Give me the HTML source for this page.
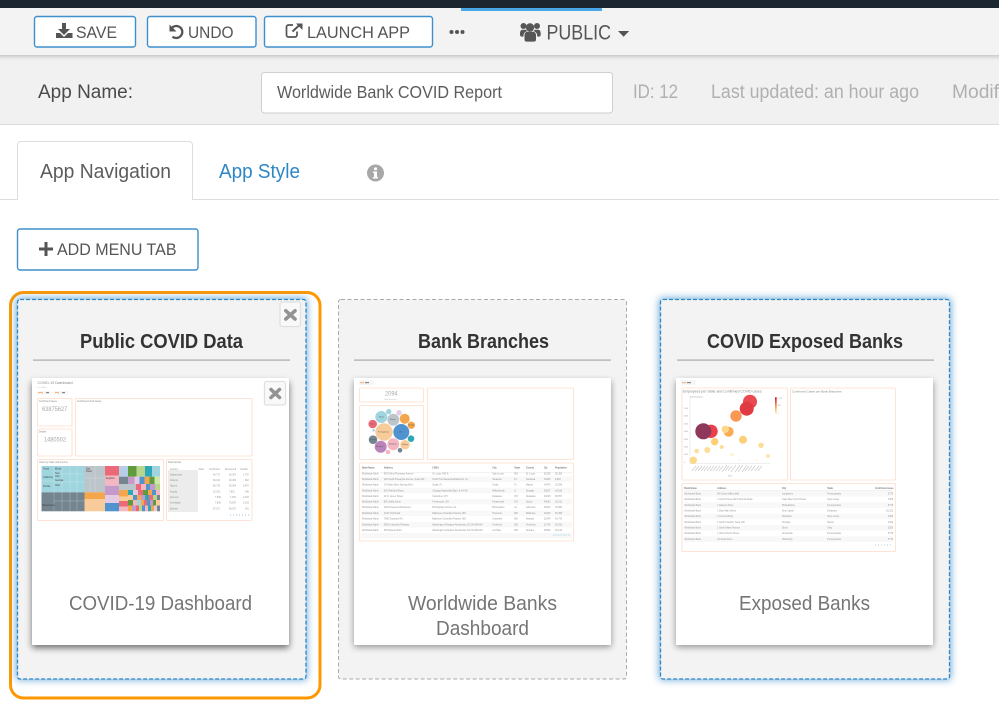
<!DOCTYPE html>
<html lang="en">
<head>
<meta charset="utf-8">
<title>Worldwide Bank COVID Report</title>
<style>
html,body{margin:0;padding:0;background:#fff;width:999px;height:727px;overflow:hidden}
svg{display:block;font-family:"Liberation Sans",sans-serif}
.b{fill:#fff;stroke:#3f8fcb;stroke-width:1.4}
.t{font-size:17px;fill:#555}
.g{font-size:19px;fill:#b0b0b0}
.h{font-size:20px;font-weight:bold;fill:#333}
.l{font-size:20px;fill:#757575}
.p{fill:#fff;stroke:#fde4d6;stroke-width:1.1}
.s text{font-size:2.3px;fill:#959595}
.hd text{font-weight:bold;fill:#777}
.x{fill:none;stroke:#939393;stroke-width:3.600;stroke-linecap:round}
</style>
</head>
<body>
<svg width="999" height="727" viewBox="0 0 999 727" xmlns="http://www.w3.org/2000/svg">
<defs>
<filter id="sh" x="-20%" y="-20%" width="140%" height="140%"><feGaussianBlur stdDeviation="3.5"/></filter>
<filter id="tb" x="-5%" y="-200%" width="110%" height="500%"><feGaussianBlur stdDeviation="2.500"/></filter>
<filter id="gl" x="-10%" y="-10%" width="120%" height="120%"><feGaussianBlur stdDeviation="4"/></filter>
<filter id="bl" x="-5%" y="-5%" width="110%" height="110%"><feGaussianBlur stdDeviation=".35"/></filter>
<linearGradient id="lg" x1="0" y1="0" x2="0" y2="1"><stop offset="0" stop-color="#c8102e"/><stop offset=".5" stop-color="#f79450"/><stop offset="1" stop-color="#fff3c4"/></linearGradient>
</defs>

<!-- top bars -->
<rect x="0" y="55" width="999" height="70" fill="#f1f1f1"/>
<rect x="-10" y="51" width="1020" height="5" fill="#888" opacity=".6" filter="url(#tb)"/>
<rect x="0" y="8" width="999" height="47" fill="#f3f3f3"/>
<rect x="0" y="0" width="999" height="8" fill="#1c2630"/>
<rect x="461" y="8" width="141" height="3" fill="#4aa8e8"/>
<rect x="0" y="124" width="999" height="1" fill="#dcdcdc"/>

<!-- toolbar buttons -->
<rect class="b" x="34.500" y="16.500" width="101" height="30.500" rx="2.500"/>
<path d="M62 23h4v6h4l-6 6-6-6h4z" fill="#555"/>
<path d="M56 33h4l4 4 4-4h4.500v5H56z" fill="#555"/>
<text class="t" x="76" y="38" textLength="41" lengthAdjust="spacingAndGlyphs">SAVE</text>

<rect class="b" x="147.500" y="16.500" width="108.500" height="30.500" rx="2.500"/>
<path d="M172.300 27.500A6 6 0 1 1 172.500 36.600" fill="none" stroke="#555" stroke-width="2.300"/>
<path d="M169.500 24.500v7h7z" fill="#555"/>
<text class="t" x="188" y="38" textLength="45.500" lengthAdjust="spacingAndGlyphs">UNDO</text>

<rect class="b" x="264.500" y="16.500" width="168" height="30.500" rx="2.500"/>
<path d="M297 31.500v3.500a2 2 0 0 1-2 2h-6.500a2 2 0 0 1-2-2v-8a2 2 0 0 1 2-2h4.500" fill="none" stroke="#555" stroke-width="1.700"/>
<path d="M292.500 31.500L299 25.500" fill="none" stroke="#555" stroke-width="2"/>
<path d="M296 23.500h6.500v6.500z" fill="#555"/>
<text class="t" x="307" y="38" textLength="103" lengthAdjust="spacingAndGlyphs">LAUNCH APP</text>

<circle cx="451.500" cy="32" r="2" fill="#555"/><circle cx="457" cy="32" r="2" fill="#555"/><circle cx="462.500" cy="32" r="2" fill="#555"/>

<!-- users icon -->
<g fill="#555">
<circle cx="530" cy="27.500" r="4.200"/><circle cx="523.500" cy="26" r="3"/><circle cx="537" cy="26" r="3"/>
<path d="M524.500 35c0-2 1.500-3.300 3-3.300h5.500c1.500 0 3 1.300 3 3.300v4.700c0 1.200-1 1.900-2 1.900h-7.500c-1 0-2-.7-2-1.900z"/>
<path d="M520 34c0-2.500 .8-4.200 2.500-4.200h3.500c.3 .7 .8 1.200 1.300 1.500-2 .2-3.800 1.900-3.800 4.300v1h-1.500c-1.300 0-2-.8-2-2z"/>
<path d="M540.700 34c0-2.500-.8-4.200-2.500-4.200h-3.500c-.3 .7-.8 1.200-1.300 1.500 2 .2 3.800 1.900 3.800 4.300v1h1.500c1.300 0 2-.8 2-2z"/>
</g>
<text x="546.500" y="39.500" font-size="21" fill="#555" textLength="64.500" lengthAdjust="spacingAndGlyphs">PUBLIC</text>
<path d="M618 31h11.200l-5.600 5.700z" fill="#555"/>

<!-- app name row -->
<text x="38" y="98" font-size="19" fill="#4a4a4a" textLength="95" lengthAdjust="spacingAndGlyphs">App Name:</text>
<rect x="261.500" y="72.500" width="351" height="40.500" rx="3" fill="#fff" stroke="#cfcfcf"/>
<text x="277" y="98" font-size="17.500" fill="#5c5c5c" textLength="225" lengthAdjust="spacingAndGlyphs">Worldwide Bank COVID Report</text>
<text class="g" x="633" y="98" textLength="45" lengthAdjust="spacingAndGlyphs">ID: 12</text>
<text class="g" x="711" y="98" textLength="208" lengthAdjust="spacingAndGlyphs">Last updated: an hour ago</text>
<text class="g" x="952" y="98" textLength="47" lengthAdjust="spacingAndGlyphs">Modif</text>

<!-- tabs -->
<rect x="0" y="125" width="999" height="602" fill="#fff"/>
<rect x="0" y="199" width="999" height="1" fill="#ddd"/>
<path d="M17.500 200V145a3.500 3.500 0 0 1 3.500-3.500H189a3.500 3.500 0 0 1 3.500 3.500V200" fill="#fff" stroke="#ddd"/>
<text x="40" y="178" font-size="20" fill="#5c5c5c" textLength="131" lengthAdjust="spacingAndGlyphs">App Navigation</text>
<text x="219" y="178" font-size="20" fill="#2d86c5" textLength="81" lengthAdjust="spacingAndGlyphs">App Style</text>
<circle cx="375.500" cy="173" r="8.500" fill="#a8a8a8"/>
<rect x="374" y="167.500" width="3" height="2.600" rx=".5" fill="#fff"/>
<path d="M373 171.500h4v5.500h1v1.500h-5.200V177h1.200v-4H373z" fill="#fff"/>

<rect class="b" x="17.500" y="229" width="180.500" height="41" rx="2.500"/>
<path d="M44.500 242h3v5.500H53v3H47.500V256h-3v-5.500H39v-3H44.500z" fill="#555"/>
<text class="t" x="57" y="255" textLength="119.500" lengthAdjust="spacingAndGlyphs">ADD MENU TAB</text>

<!-- card 1 -->
<rect x="10.500" y="292.500" width="309.500" height="405.500" rx="13" fill="#fff" stroke="#ff9800" stroke-width="3"/>
<rect x="16" y="298" width="291" height="382" rx="3" fill="#3f8fcb" opacity=".75" filter="url(#gl)"/>
<rect x="17.500" y="299.500" width="288.500" height="379.500" rx="2.500" fill="#f3f3f3" stroke="#2d86c5" stroke-width="1.300" stroke-dasharray="4 2"/>
<rect x="280" y="302" width="20.500" height="24.500" rx="2" fill="#f9f9f9" stroke="#e0e0e0" stroke-width="1.300"/>
<path class="x" d="M285.800 310.800L295 319M295 310.800L285.800 319"/>
<text class="h" x="80" y="348" textLength="163" lengthAdjust="spacingAndGlyphs">Public COVID Data</text>
<rect x="33" y="359.500" width="257" height="1.200" fill="#aaa"/>
<rect x="32" y="382" width="257" height="266" fill="#000" opacity=".55" filter="url(#sh)"/>
<rect x="32" y="378" width="257" height="267" rx="1" fill="#fff"/>
<text class="l" x="69" y="610" textLength="183" lengthAdjust="spacingAndGlyphs">COVID-19 Dashboard</text>

<g filter="url(#bl)">
<text x="37.500" y="384" font-size="3.600" fill="#888">COVID-19 Dashboard</text>
<text x="37.500" y="388" font-size="2" fill="#bbb">Last Filter</text>
<rect x="37.500" y="391" width="14" height="3.500" fill="#f6f6f6"/><rect x="54" y="391" width="14" height="3.500" fill="#f6f6f6"/>
<rect x="38" y="392" width="5" height="1.200" fill="#f8b98a"/><rect x="46" y="392" width="3" height="1.200" fill="#888"/>
<rect x="55" y="392" width="4" height="1.200" fill="#f8b98a"/><rect x="62" y="392" width="3" height="1.200" fill="#888"/>
<rect class="p" x="37.500" y="398.500" width="34.500" height="27.500" rx="1"/>
<rect class="p" x="37.500" y="429" width="34.500" height="27" rx="1"/>
<rect class="p" x="75.500" y="398.500" width="176.500" height="57.500" rx="1"/>
<rect class="p" x="37.500" y="459.500" width="126" height="61" rx="1"/>
<rect class="p" x="166.500" y="459.500" width="85.500" height="61" rx="1"/>
<text x="39" y="402" font-size="2.300" fill="#888">Confirmed Cases</text>
<text x="42" y="411" font-size="6" fill="#a8a8a8" textLength="25.300" lengthAdjust="spacingAndGlyphs">63875627</text>
<text x="39" y="432.500" font-size="2.300" fill="#888">Deaths</text>
<text x="44" y="441.700" font-size="6" fill="#a8a8a8" textLength="22" lengthAdjust="spacingAndGlyphs">1480502</text>
<text x="77" y="402" font-size="2.300" fill="#888">Confirmed Covid Cases</text>
<text x="39" y="463" font-size="2.300" fill="#888">Cases by State and Country</text>
<text x="168" y="463" font-size="2.300" fill="#888">Data Sample</text>
<!-- treemap -->
<rect x="41.500" y="466" width="43" height="26.300" fill="#9fd5de"/>
<rect x="41.500" y="492.300" width="43" height="19" fill="#74858f"/>
<rect x="84.500" y="466" width="20.500" height="26.300" fill="#bcc5ca"/>
<rect x="84.500" y="492.300" width="20.500" height="7" fill="#f3a64c"/>
<rect x="84.500" y="499.300" width="20.500" height="12" fill="#f8cb9a"/>
<rect x="105" y="466" width="14" height="9.700" fill="#ec6a78"/>
<rect x="105" y="475.700" width="14" height="10" fill="#f4b6c0"/>
<rect x="105" y="485.700" width="14" height="9.300" fill="#c39ac9"/>
<rect x="105" y="495" width="14" height="8" fill="#e3cbe6"/>
<rect x="105" y="503" width="14" height="8.300" fill="#4f93cf"/>
<rect x="119" y="466" width="9" height="10.700" fill="#b5cfe8"/>
<rect x="128" y="466" width="8.700" height="10.700" fill="#5f9b3e"/>
<rect x="136.700" y="466" width="8.300" height="10.700" fill="#b5d68c"/>
<rect x="145" y="466" width="7" height="10.700" fill="#2fa8b8"/>
<rect x="152" y="466" width="8" height="10.700" fill="#9fd5de"/>
<rect x="119" y="476.700" width="9" height="7.300" fill="#74858f"/>
<rect x="128" y="476.700" width="6.500" height="7.300" fill="#c39ac9"/>
<rect x="134.500" y="476.700" width="5" height="7.300" fill="#e3cbe6"/>
<rect x="139.500" y="476.700" width="5" height="7.300" fill="#4f93cf"/>
<rect x="144.500" y="476.700" width="5" height="7.300" fill="#f3a64c"/>
<rect x="149.500" y="476.700" width="5" height="7.300" fill="#5f9b3e"/>
<rect x="154.500" y="476.700" width="5.500" height="7.300" fill="#cfe6a8"/>
<rect x="119" y="484" width="9" height="6" fill="#bcc5ca"/>
<rect x="128" y="484" width="8" height="6" fill="#bcc5ca"/>
<rect x="136" y="484" width="5" height="6" fill="#ec6a78"/>
<rect x="141" y="484" width="5" height="6" fill="#f4b6c0"/>
<rect x="146" y="484" width="4" height="6" fill="#4f93cf"/>
<rect x="150" y="484" width="5" height="6" fill="#c39ac9"/>
<rect x="155" y="484" width="5" height="6" fill="#b5d68c"/>
<rect x="119" y="490" width="9" height="6.700" fill="#f3a64c"/>
<rect x="119" y="496.700" width="9" height="4.300" fill="#f8cb9a"/>
<rect x="119" y="501" width="9" height="5.700" fill="#ec6a78"/>
<rect x="119" y="506.700" width="9" height="4.600" fill="#f4b6c0"/>
<rect x="128" y="490" width="5" height="5" fill="#2fa8b8"/>
<rect x="133" y="490" width="5" height="5" fill="#e3cbe6"/>
<rect x="138" y="490" width="5" height="5" fill="#ec6a78"/>
<rect x="143" y="490" width="5" height="5" fill="#5f9b3e"/>
<rect x="148" y="490" width="4" height="5" fill="#f3a64c"/>
<rect x="152" y="490" width="4" height="5" fill="#4f93cf"/>
<rect x="156" y="490" width="4" height="5" fill="#f4b6c0"/>
<rect x="128" y="495" width="5" height="5" fill="#f8cb9a"/>
<rect x="133" y="495" width="4" height="5" fill="#4f93cf"/>
<rect x="137" y="495" width="4" height="5" fill="#f3a64c"/>
<rect x="141" y="495" width="4" height="5" fill="#c39ac9"/>
<rect x="145" y="495" width="4" height="5" fill="#2fa8b8"/>
<rect x="149" y="495" width="4" height="5" fill="#ec6a78"/>
<rect x="153" y="495" width="4" height="5" fill="#b5d68c"/>
<rect x="157" y="495" width="3" height="5" fill="#74858f"/>
<rect x="128" y="500" width="5" height="5.500" fill="#5f9b3e"/>
<rect x="133" y="500" width="4" height="5.500" fill="#f4b6c0"/>
<rect x="137" y="500" width="4" height="5.500" fill="#9fd5de"/>
<rect x="141" y="500" width="3" height="5.500" fill="#f3a64c"/>
<rect x="144" y="500" width="3" height="5.500" fill="#ec6a78"/>
<rect x="147" y="500" width="3" height="5.500" fill="#4f93cf"/>
<rect x="150" y="500" width="3" height="5.500" fill="#c39ac9"/>
<rect x="153" y="500" width="3" height="5.500" fill="#5f9b3e"/>
<rect x="156" y="500" width="4" height="5.500" fill="#f8cb9a"/>
<rect x="128" y="505.500" width="4" height="5.800" fill="#f3a64c"/>
<rect x="132" y="505.500" width="4" height="5.800" fill="#c39ac9"/>
<rect x="136" y="505.500" width="3" height="5.800" fill="#ec6a78"/>
<rect x="139" y="505.500" width="3" height="5.800" fill="#b5d68c"/>
<rect x="142" y="505.500" width="3" height="5.800" fill="#4f93cf"/>
<rect x="145" y="505.500" width="3" height="5.800" fill="#f4b6c0"/>
<rect x="148" y="505.500" width="3" height="5.800" fill="#2fa8b8"/>
<rect x="151" y="505.500" width="3" height="5.800" fill="#f3a64c"/>
<rect x="154" y="505.500" width="3" height="5.800" fill="#e3cbe6"/>
<rect x="157" y="505.500" width="3" height="5.800" fill="#74858f"/>
<path d="M54 466v26M70 466v26M54 474h30M54 482h30M62 466v26M77 466v26M41.500 481h12.500M54 492v19M70 492v19M62 492v19M77 492v19M54 501h30M84.500 478h20.500M95 466v26M90 478v14" stroke="#fff" stroke-width=".35" opacity=".55" fill="none"/>
<g font-size="2.300" fill="#444"><text x="43" y="469.500">Texas</text><text x="55" y="469.500">Illinois</text><text x="43" y="478">California</text><text x="55" y="474">New</text><text x="55" y="477">York</text><text x="43" y="487">Florida</text><text x="55" y="481">Georgia</text><text x="55" y="486">Ohio</text><text x="86" y="469.500">Sao</text><text x="86" y="472">Paulo</text><text x="106" y="479">England</text><text x="42" y="506">Maharashtra</text></g>
<!-- data sample -->
<rect x="168" y="470" width="30" height="42" fill="#ececec"/>
<g class="s">
<text x="170" y="470">Country</text><text x="198.500" y="470">State</text><text x="209" y="470">Confirmed</text><text x="225" y="470">Recovered</text><text x="240.500" y="470">Deaths</text>
<text x="170" y="475.500">Afghanistan</text><text x="213" y="475.500">46,717</text><text x="229" y="475.500">36,307</text><text x="243" y="475.500">1,797</text>
<text x="170" y="481">Albania</text><text x="213" y="481">39,014</text><text x="229" y="481">18,384</text><text x="245" y="481">822</text>
<text x="170" y="486.500">Algeria</text><text x="213" y="486.500">86,730</text><text x="229" y="486.500">55,924</text><text x="243" y="486.500">2,497</text>
<text x="170" y="492.500">Angola</text><text x="213" y="492.500">15,291</text><text x="229" y="492.500">7,851</text><text x="245" y="492.500">348</text>
<text x="170" y="498">Armenia</text><text x="215" y="498">7,836</text><text x="230" y="498">7,156</text><text x="243" y="498">2,183</text>
<text x="170" y="503.500">Azerbaijan</text><text x="215" y="503.500">7,836</text><text x="229" y="503.500">75,657</text><text x="243" y="503.500">1,533</text>
<text x="170" y="509.500">Bahrain</text><text x="213" y="509.500">87,107</text><text x="229" y="509.500">85,207</text><text x="245" y="509.500">341</text>
</g>
<path d="M230 515h20" stroke="#9fc4e0" stroke-width="1" stroke-dasharray="1 2"/>
</g>
<rect x="264.500" y="381.500" width="21" height="23.500" rx="2" fill="#f9f9f9" stroke="#e0e0e0" stroke-width="1.300"/>
<path class="x" d="M271 389.500L279.500 397.500M279.500 389.500L271 397.500"/>

<!-- card 2 -->
<rect x="338.500" y="299.500" width="288" height="379.500" rx="2.500" fill="#f3f3f3" stroke="#aaa" stroke-width="1" stroke-dasharray="4 2.500"/>
<text class="h" x="418" y="348" textLength="131" lengthAdjust="spacingAndGlyphs">Bank Branches</text>
<rect x="354" y="359.500" width="257" height="1.200" fill="#aaa"/>
<rect x="354" y="381" width="257" height="266" fill="#000" opacity=".4" filter="url(#sh)"/>
<rect x="354" y="378" width="257" height="267" rx="1" fill="#fff"/>
<text class="l" x="408" y="610" textLength="149" lengthAdjust="spacingAndGlyphs">Worldwide Banks</text>
<text class="l" x="436" y="635" textLength="93" lengthAdjust="spacingAndGlyphs">Dashboard</text>

<g filter="url(#bl)">
<rect x="359" y="380" width="15" height="5" fill="#f6f6f6"/>
<rect x="360" y="382" width="4" height="1.200" fill="#f8b98a"/><rect x="365" y="382" width="4" height="1.200" fill="#888"/>
<rect class="p" x="359.500" y="388" width="64" height="14" rx="1"/>
<rect class="p" x="359.500" y="405.500" width="64" height="54" rx="1"/>
<rect class="p" x="427.500" y="388" width="146" height="71.500" rx="1"/>
<rect class="p" x="359.500" y="463" width="214" height="78" rx="1"/>
<text x="385" y="395.700" font-size="6" fill="#a8a8a8" textLength="12.700" lengthAdjust="spacingAndGlyphs">2094</text>
<text x="384" y="400" font-size="1.900" fill="#bbb">Total Branches</text>
<g>
<circle cx="384" cy="432" r="8.700" fill="#f8cb9a"/><circle cx="401.300" cy="432" r="8" fill="#4f93cf"/>
<circle cx="381.300" cy="417" r="6" fill="#9fd5de"/><circle cx="393.300" cy="419.700" r="6" fill="#bcc5ca"/>
<circle cx="404.700" cy="418.700" r="5" fill="#f3a64c"/><circle cx="372.700" cy="424" r="4.300" fill="#ec6a78"/>
<circle cx="411.300" cy="425.300" r="3.700" fill="#f3a64c"/><circle cx="388.700" cy="411.700" r="2.700" fill="#9fd5de"/>
<circle cx="399" cy="412.700" r="2.700" fill="#e3cbe6"/><circle cx="373" cy="439.700" r="4.300" fill="#74858f"/>
<circle cx="380.700" cy="446.700" r="6" fill="#b983bc"/><circle cx="393.300" cy="444.300" r="6" fill="#f4b6c0"/>
<circle cx="405" cy="444.700" r="4.700" fill="#f8cb9a"/><circle cx="411" cy="438.700" r="3.300" fill="#2fa8b8"/>
<circle cx="388" cy="452" r="2.300" fill="#f4b6c0"/><circle cx="400" cy="450.300" r="2.300" fill="#74858f"/>
<circle cx="373.700" cy="430.300" r="1.300" fill="#b5cfe8"/>
</g>
<g font-size="1.800" fill="#555"><text x="378" y="432.500">Pennsylvania</text><text x="399" y="432.500">Ohio</text><text x="379" y="417.500">Illinois</text><text x="390" y="420">Florida</text><text x="408" y="425.500">Georgia</text><text x="370" y="424.500">Texas</text><text x="376" y="447">Michigan</text><text x="389" y="444.500">Maryland</text><text x="402" y="445">Indiana</text><text x="370" y="440">Virginia</text></g>
<rect x="361" y="472" width="211" height=".5" fill="#e4e4e4"/>
<rect x="361" y="476.500" width="211" height="5.500" fill="#f8f8f8"/><rect x="361" y="487.700" width="211" height="5.500" fill="#f8f8f8"/><rect x="361" y="499" width="211" height="5.500" fill="#f8f8f8"/><rect x="361" y="510.500" width="211" height="5.500" fill="#f8f8f8"/><rect x="361" y="522" width="211" height="5.500" fill="#f8f8f8"/><rect x="361" y="533" width="211" height="5.500" fill="#f8f8f8"/>
<g class="s">
<g class="hd"><text x="362" y="468.500">Bank Name</text><text x="383.700" y="468.500">Address</text><text x="432.300" y="468.500">CBSA</text><text x="492.300" y="468.500">City</text><text x="514.300" y="468.500">State</text><text x="526" y="468.500">County</text><text x="544" y="468.500">Zip</text><text x="555" y="468.500">Population</text></g>
<text x="362" y="474.500">Worldwide Bank</text><text x="383.700" y="474.500">8001 West Florissant Avenue</text><text x="432.300" y="474.500">St. Louis, MO-IL</text><text x="492.300" y="474.500">Saint Louis</text><text x="514.300" y="474.500">MO</text><text x="526" y="474.500">St. Louis</text><text x="544" y="474.500">63136</text><text x="555" y="474.500">36,386</text>
<text x="362" y="480">Worldwide Bank</text><text x="383.700" y="480">100 South Pineapple Avenue, Suite 200</text><text x="432.300" y="480">North Port-Sarasota-Bradenton, FL</text><text x="492.300" y="480">Sarasota</text><text x="514.300" y="480">FL</text><text x="526" y="480">Sarasota</text><text x="544" y="480">34236</text><text x="555" y="480">9,818</text>
<text x="362" y="485.700">Worldwide Bank</text><text x="383.700" y="485.700">714 East Silver Springs Blvd</text><text x="432.300" y="485.700">Ocala, FL</text><text x="492.300" y="485.700">Ocala</text><text x="514.300" y="485.700">FL</text><text x="526" y="485.700">Marion</text><text x="544" y="485.700">34470</text><text x="555" y="485.700">15,598</text>
<text x="362" y="491.300">Worldwide Bank</text><text x="383.700" y="491.300">625 Plainfield Road</text><text x="432.300" y="491.300">Chicago-Naperville-Elgin, IL-IN-WI</text><text x="492.300" y="491.300">Willowbrook</text><text x="514.300" y="491.300">IL</text><text x="526" y="491.300">Dupage</text><text x="544" y="491.300">60527</text><text x="555" y="491.300">24,618</text>
<text x="362" y="497">Worldwide Bank</text><text x="383.700" y="497">42 N. Green Street</text><text x="432.300" y="497">Columbus, OH</text><text x="492.300" y="497">Delaware</text><text x="514.300" y="497">OH</text><text x="526" y="497">Delaware</text><text x="544" y="497">43015</text><text x="555" y="497">36,557</text>
<text x="362" y="502.700">Worldwide Bank</text><text x="383.700" y="502.700">802 Gallia Street</text><text x="432.300" y="502.700">Portsmouth, OH</text><text x="492.300" y="502.700">Portsmouth</text><text x="514.300" y="502.700">OH</text><text x="526" y="502.700">Scioto</text><text x="544" y="502.700">45662</text><text x="555" y="502.700">19,513</text>
<text x="362" y="508">Worldwide Bank</text><text x="383.700" y="508">2001 Roosevelt Boulevard</text><text x="432.300" y="508">Birmingham-Hoover, AL</text><text x="492.300" y="508">Birmingham</text><text x="514.300" y="508">AL</text><text x="526" y="508">Jefferson</text><text x="544" y="508">35233</text><text x="555" y="508">15,586</text>
<text x="362" y="513.800">Worldwide Bank</text><text x="383.700" y="513.800">2145 York Road</text><text x="432.300" y="513.800">Baltimore-Columbia-Towson, MD</text><text x="492.300" y="513.800">Timonium</text><text x="514.300" y="513.800">MD</text><text x="526" y="513.800">Baltimore</text><text x="544" y="513.800">21093</text><text x="555" y="513.800">35,495</text>
<text x="362" y="519.500">Worldwide Bank</text><text x="383.700" y="519.500">7090 Snowden Rd</text><text x="432.300" y="519.500">Baltimore-Columbia-Towson, MD</text><text x="492.300" y="519.500">Columbia</text><text x="514.300" y="519.500">MD</text><text x="526" y="519.500">Howard</text><text x="544" y="519.500">21044</text><text x="555" y="519.500">42,743</text>
<text x="362" y="525.300">Worldwide Bank</text><text x="383.700" y="525.300">5550 Urbanford Parkway</text><text x="432.300" y="525.300">Washington-Arlington-Alexandria, DC-VA-MD-WV</text><text x="492.300" y="525.300">Frederick</text><text x="514.300" y="525.300">MD</text><text x="526" y="525.300">Frederick</text><text x="544" y="525.300">21704</text><text x="555" y="525.300">18,913</text>
<text x="362" y="531">Worldwide Bank</text><text x="383.700" y="531">330 Rosecroft Rd</text><text x="432.300" y="531">Washington-Arlington-Alexandria, DC-VA-MD-WV</text><text x="492.300" y="531">La Plata</text><text x="514.300" y="531">MD</text><text x="526" y="531">Charles</text><text x="544" y="531">20646</text><text x="555" y="531">19,145</text>
</g>
<path d="M553 535h17" stroke="#c5dcec" stroke-width="1.300" stroke-dasharray="1.500 1"/>
</g>

<!-- card 3 -->
<rect x="659" y="298" width="292" height="382" rx="3" fill="#3f8fcb" opacity=".75" filter="url(#gl)"/>
<rect x="660.500" y="299.500" width="289" height="379.500" rx="2.500" fill="#f3f3f3" stroke="#2d86c5" stroke-width="1.300" stroke-dasharray="4 2"/>
<text class="h" x="707" y="348" textLength="196" lengthAdjust="spacingAndGlyphs">COVID Exposed Banks</text>
<rect x="677" y="359.500" width="257" height="1.200" fill="#aaa"/>
<rect x="676" y="381" width="257" height="266" fill="#000" opacity=".4" filter="url(#sh)"/>
<rect x="676" y="378" width="257" height="267" rx="1" fill="#fff"/>
<text class="l" x="739" y="610" textLength="131" lengthAdjust="spacingAndGlyphs">Exposed Banks</text>

<g filter="url(#bl)">
<rect x="681" y="380" width="15" height="5" fill="#f6f6f6"/>
<rect x="682" y="382" width="4" height="1.200" fill="#f8b98a"/><rect x="687" y="382" width="4" height="1.200" fill="#888"/>
<rect class="p" x="682" y="388" width="105.500" height="92" rx="1"/>
<rect class="p" x="790.500" y="388" width="105" height="92" rx="1"/>
<rect class="p" x="682" y="483.500" width="213.500" height="68" rx="1"/>
<text x="683" y="392.500" font-size="3.500" fill="#888">Employees per State and Confirmed COVID cases</text>
<text x="792" y="392.500" font-size="3" fill="#888">Confirmed Cases per Bank Branches</text>
<path d="M690 396v67.500h80" fill="none" stroke="#ddd" stroke-width=".5"/>
<g opacity=".88">
<circle cx="750" cy="401.700" r="7" fill="#e8303a"/><circle cx="746.700" cy="408.700" r="7" fill="#dc1f2a"/>
<circle cx="736" cy="416" r="5.700" fill="#f78a3c"/><circle cx="711" cy="431.300" r="6.700" fill="#e8262f"/>
<circle cx="703.300" cy="431.300" r="8" fill="#7f1d45"/><circle cx="728.700" cy="431.700" r="5" fill="#f9a03f"/>
<circle cx="725.300" cy="429.300" r="3.700" fill="#fdd27a"/><circle cx="743" cy="439.700" r="4" fill="#fdc965"/>
<circle cx="714.700" cy="441.700" r="3.700" fill="#fdc965"/><circle cx="707.300" cy="450" r="3" fill="#fdd98a"/>
<circle cx="696.700" cy="451" r="2.300" fill="#fdd98a"/><circle cx="721.700" cy="447" r="2" fill="#fdd98a"/>
<circle cx="761" cy="445.300" r="2.700" fill="#fdd98a"/><circle cx="693.300" cy="460.300" r="3.700" fill="#fdd27a"/>
<circle cx="732" cy="454.700" r="1.700" fill="#fff0c0"/><circle cx="768" cy="456" r="2" fill="#fde39e"/>
<circle cx="739.300" cy="460" r="1" fill="#fff3d0"/><circle cx="756.700" cy="460" r="1" fill="#fff3d0"/>
</g>
<rect x="775" y="397.300" width="1.700" height="16.700" fill="url(#lg)"/>
<g font-size="1.800" fill="#999"><text x="777.500" y="399">1,716</text><text x="777.500" y="406">858</text><text x="777.500" y="414">1</text><text x="684" y="463">0</text><text x="684" y="455">1000</text><text x="684" y="447.500">2000</text><text x="684" y="440">3000</text><text x="684" y="432">4000</text><text x="684" y="424.500">5000</text><text x="684" y="416.500">6000</text><text x="684" y="409">7000</text><text x="690" y="397.500">Total Employees</text><text x="728" y="476.500">State</text></g>
<path d="M692 471l4-5M695 471l4-5M698 471l4-5M701 471l4-5M704 471l4-5M707 471l4-5M710 471l4-5M713 471l4-5M716 471l4-5M719 471l4-5M722 472l5-7M725 471l4-5M728 471l4-5M731 472l5-7M735 472l5-7M738 472l5-7M742 472l5-7M745 471l4-5M748 471l4-5M751 471l4-5M755 471l4-5M758 471l4-5" stroke="#ccc" stroke-width=".7"/>
<rect x="684" y="491" width="209" height="5.600" fill="#f8f8f8"/><rect x="684" y="502.300" width="209" height="5.600" fill="#f8f8f8"/><rect x="684" y="513.700" width="209" height="5.600" fill="#f8f8f8"/><rect x="684" y="525" width="209" height="5.600" fill="#f8f8f8"/><rect x="684" y="536.300" width="209" height="5.600" fill="#f8f8f8"/>
<rect x="684" y="490.500" width="209" height=".5" fill="#e4e4e4"/>
<g class="s">
<g class="hd"><text x="684.300" y="489">Bank Name</text><text x="717.300" y="489">Address</text><text x="782" y="489">City</text><text x="827.300" y="489">State</text><text x="875" y="489">Confirmed cases</text></g>
<text x="684.300" y="494.500">Worldwide Bank</text><text x="717.300" y="494.500">80 Oxford Valley Mall</text><text x="782" y="494.500">Langhorne</text><text x="827.300" y="494.500">Pennsylvania</text><text x="888" y="494.500">5778</text>
<text x="684.300" y="500">Worldwide Bank</text><text x="717.300" y="500">1 Court House North Dennis Road</text><text x="782" y="500">Cape May Court House</text><text x="827.300" y="500">New Jersey</text><text x="888" y="500">3405</text>
<text x="684.300" y="505.800">Worldwide Bank</text><text x="717.300" y="505.800">1 Dawson Drive</text><text x="782" y="505.800">Philadelphia</text><text x="827.300" y="505.800">Pennsylvania</text><text x="888" y="505.800">5778</text>
<text x="684.300" y="511.500">Worldwide Bank</text><text x="717.300" y="511.500">1 East Main Street</text><text x="782" y="511.500">New Castle</text><text x="827.300" y="511.500">Delaware</text><text x="886" y="511.500">16,220</text>
<text x="684.300" y="517">Worldwide Bank</text><text x="717.300" y="517">1 Lincoln Plaza</text><text x="782" y="517">Westfield</text><text x="827.300" y="517">New Jersey</text><text x="888" y="517">3405</text>
<text x="684.300" y="522.800">Worldwide Bank</text><text x="717.300" y="522.800">1 North Franklin, Suite 100</text><text x="782" y="522.800">Chicago</text><text x="827.300" y="522.800">Illinois</text><text x="888" y="522.800">1364</text>
<text x="684.300" y="528.500">Worldwide Bank</text><text x="717.300" y="528.500">1 North Miami Avenue</text><text x="782" y="528.500">Dixon</text><text x="827.300" y="528.500">Ohio</text><text x="888" y="528.500">2555</text>
<text x="684.300" y="534">Worldwide Bank</text><text x="717.300" y="534">1 West Church Street</text><text x="782" y="534">Uniontown</text><text x="827.300" y="534">Pennsylvania</text><text x="888" y="534">5778</text>
<text x="684.300" y="540">Worldwide Bank</text><text x="717.300" y="540">10 Andra Drive</text><text x="782" y="540">Pittsburgh</text><text x="827.300" y="540">Pennsylvania</text><text x="888" y="540">5778</text>
</g>
<path d="M875 545h18" stroke="#b5cfe0" stroke-width="1" stroke-dasharray="1 2"/>
</g>
</svg>
</body>
</html>
